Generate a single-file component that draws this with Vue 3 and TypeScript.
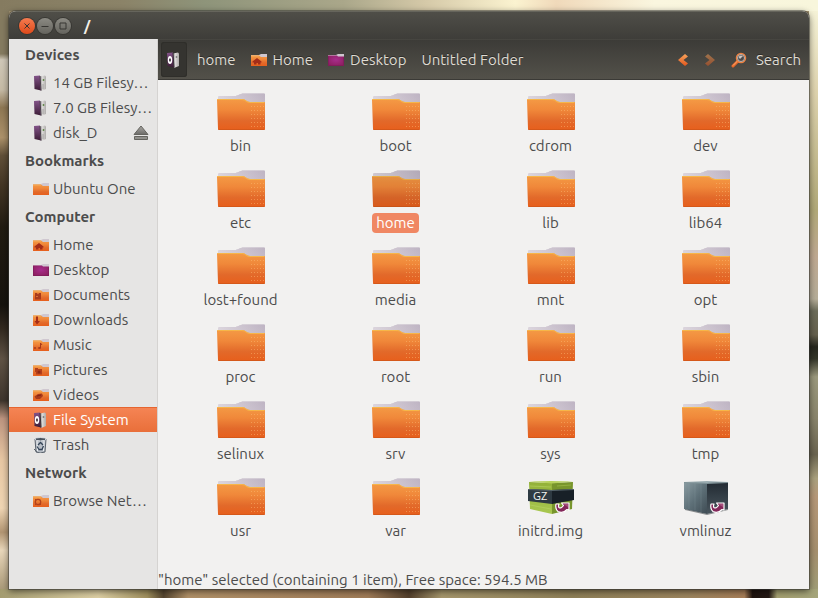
<script setup lang="ts">
import { ref } from 'vue'

interface Place {
  name: string
  icon: string
  ejectable?: boolean
}

interface PlaceGroup {
  title: string
  places: Place[]
}

interface Entry {
  name: string
  icon: string
  badge?: string
}

interface Crumb {
  name: string
  icon?: string
}

const groups: PlaceGroup[] = [
  {
    title: 'Devices',
    places: [
      { name: '14 GB Filesy…', icon: 'drive' },
      { name: '7.0 GB Filesy…', icon: 'drive' },
      { name: 'disk_D', icon: 'drive', ejectable: true },
    ],
  },
  { title: 'Bookmarks', places: [{ name: 'Ubuntu One', icon: 'small-folder' }] },
  {
    title: 'Computer',
    places: [
      { name: 'Home', icon: 'home' },
      { name: 'Desktop', icon: 'desktop' },
      { name: 'Documents', icon: 'documents' },
      { name: 'Downloads', icon: 'downloads' },
      { name: 'Music', icon: 'music' },
      { name: 'Pictures', icon: 'pictures' },
      { name: 'Videos', icon: 'videos' },
      { name: 'File System', icon: 'system' },
      { name: 'Trash', icon: 'trash' },
    ],
  },
  { title: 'Network', places: [{ name: 'Browse Net…', icon: 'network' }] },
]

const crumbs: Crumb[] = [
  { name: 'home' },
  { name: 'Home', icon: 'home' },
  { name: 'Desktop', icon: 'desktop' },
  { name: 'Untitled Folder' },
]

const folderNames = [
  'bin', 'boot', 'cdrom', 'dev', 'etc', 'home', 'lib', 'lib64', 'lost+found', 'media', 'mnt',
  'opt', 'proc', 'root', 'run', 'sbin', 'selinux', 'srv', 'sys', 'tmp', 'usr', 'var',
]

const entries: Entry[] = [
  ...folderNames.map((name) => ({ name, icon: 'folder' })),
  { name: 'initrd.img', icon: 'archive', badge: 'GZ' },
  { name: 'vmlinuz', icon: 'package' },
]

const currentPlace = ref('File System')
const selected = ref('home')
</script>

<template>
  <div class="wallpaper">
    <svg class="symbols" aria-hidden="true">
      <defs>
        <linearGradient id="g-front" x1="0" y1="0" x2="0" y2="1">
          <stop offset="0" stop-color="#f49a45" />
          <stop offset="0.35" stop-color="#f0883a" />
          <stop offset="0.7" stop-color="#e2692a" />
          <stop offset="1" stop-color="#e75f1c" />
        </linearGradient>
        <linearGradient id="g-back" x1="0" y1="0" x2="0" y2="1">
          <stop offset="0" stop-color="#c0b6c4" />
          <stop offset="1" stop-color="#e2dce4" />
        </linearGradient>
        <linearGradient id="g-backline" x1="0" y1="0" x2="1" y2="0">
          <stop offset="0" stop-color="#ebe6ea" />
          <stop offset="1" stop-color="#bdb2c2" />
        </linearGradient>
        <radialGradient id="g-desk" cx="0.5" cy="0.4" r="0.7">
          <stop offset="0" stop-color="#a72d8c" />
          <stop offset="1" stop-color="#8b1d5c" />
        </radialGradient>
        <linearGradient id="g-purple" x1="0" y1="0" x2="0" y2="1">
          <stop offset="0" stop-color="#84548a" />
          <stop offset="1" stop-color="#3c1c36" />
        </linearGradient>
        <linearGradient id="g-metal" x1="0" y1="0" x2="1" y2="0">
          <stop offset="0" stop-color="#8c8a8c" />
          <stop offset="0.4" stop-color="#dcdad8" />
          <stop offset="1" stop-color="#aeacaa" />
        </linearGradient>
        <linearGradient id="g-arrow" x1="0" y1="0" x2="0" y2="1">
          <stop offset="0" stop-color="#f7a45c" />
          <stop offset="1" stop-color="#e2561c" />
        </linearGradient>
        <linearGradient id="g-eject" x1="0" y1="0" x2="0" y2="1">
          <stop offset="0" stop-color="#aaa8a4" />
          <stop offset="1" stop-color="#6c6b68" />
        </linearGradient>
        <linearGradient id="g-slate" x1="0" y1="0" x2="1" y2="1">
          <stop offset="0" stop-color="#8a9ca2" />
          <stop offset="0.5" stop-color="#5e7078" />
          <stop offset="1" stop-color="#3f4c54" />
        </linearGradient>
        <linearGradient id="g-slate-dark" x1="0" y1="0" x2="0" y2="1">
          <stop offset="0" stop-color="#232b33" />
          <stop offset="1" stop-color="#49565e" />
        </linearGradient>
        <linearGradient id="g-green" x1="0" y1="0" x2="0" y2="1">
          <stop offset="0" stop-color="#93b138" />
          <stop offset="1" stop-color="#a9c850" />
        </linearGradient>
        <pattern id="p-dots" width="3" height="4" patternUnits="userSpaceOnUse">
          <rect x="1" y="1" width="1" height="1" fill="#ffc27a" opacity="0.45" />
        </pattern>
      </defs>

      <symbol id="i-folder" viewBox="0 0 48 38">
        <path d="M1 4.500Q1 3 2.500 3H17C22 3 22 .5 27 .5H47Q48 .5 48 1.500V30H1Z" fill="url(#g-back)" />
        <path d="M1 4.500Q1 3 2.500 3H17C22 3 22 .5 27 .5H47Q48 .5 48 1.500V9H1Z" fill="url(#g-backline)" opacity="0.6" />
        <path d="M0 7Q0 6 1 6H25C29 6 29 9 33 9H48L48 36Q48 37 47 37H2Q1 37 1 36Z" fill="url(#g-front)" />
        <path d="M0.500 6.500H25C29 6.500 29 9.500 33 9.500H47.500" fill="none" stroke="#f6b649" />
        <path d="M34 13H47V34H34Z" fill="url(#p-dots)" />
        <path d="M1.500 36.500H47.500" stroke="#d5581a" />
      </symbol>

      <symbol id="i-link" viewBox="0 0 15 12">
        <path d="M1 2Q0 7 3 9.500Q8 12 12 7.500L14 8V1H6.500L8.500 3.500Q6 7 4 5.500Q3 4.500 4 2Z" fill="#84285a" stroke="#fff" stroke-width="1.2" stroke-linejoin="round" />
        <path d="M8 2H13V5Z" fill="#a64d7c" />
      </symbol>

      <symbol id="i-archive" viewBox="0 0 48 38">
        <path d="M2 4L25 5V36L3 31Z" fill="url(#g-green)" />
        <path d="M25 5L46 4L45 31L25 36Z" fill="#78952c" />
        <path d="M2 3.500L24 3L46 3.500L25 5.500Z" fill="#b7d15d" />
        <path d="M3 8L24 9M3 27L24 31" stroke="#bad668" opacity="0.55" />
        <path d="M30 8L44 7M29 27L43 25" stroke="#a5c14e" opacity="0.6" />
        <path d="M1 11L25 12V26L1 23Z" fill="#2e3a42" />
        <path d="M25 12L47 11V22L25 26Z" fill="#182027" />
        <path d="M1 11.500L25 12.500L47 11.500" stroke="#56646b" fill="none" />
        <use href="#i-link" x="28" y="24" width="15" height="12" />
      </symbol>

      <symbol id="i-package" viewBox="0 0 48 38">
        <path d="M2 4L25 3L46 4L25 6Z" fill="#9daeb3" />
        <path d="M2 4.500L25 5V36L2 31Z" fill="url(#g-slate)" />
        <path d="M25 5L46 4.500V31L25 36Z" fill="url(#g-slate-dark)" />
        <path d="M7 5V31M13 5V32M19 5V34" stroke="#9bb0b5" opacity="0.17" />
        <path d="M2 4.500L25 5.500L46 4.500" stroke="#7f9297" fill="none" />
        <path d="M3 31.500L25 36.500L46 31.500" stroke="#252c30" fill="none" opacity="0.5" />
        <use href="#i-link" x="28" y="24" width="15" height="12" />
      </symbol>

      <symbol id="i-small-folder" viewBox="0 0 16 16">
        <path d="M0 3H8L10 2H16V8H0Z" fill="#cfc7d0" />
        <path d="M0 3.500H8L10 5H16V14H0Z" fill="url(#g-front)" />
        <path d="M0 4H8" stroke="#f6ad58" />
      </symbol>
      <symbol id="i-home" viewBox="0 0 16 16">
        <use href="#i-small-folder" width="16" height="16" />
        <path d="M6 6L10.500 9.500V10.500H9.500V12.500H7V11H5.500V12.500H3V10.500H1.500V9.500Z" fill="#a42d18" />
      </symbol>
      <symbol id="i-desktop" viewBox="0 0 16 16">
        <path d="M0 3H8L10 2H16V8H0Z" fill="#cfc7d0" />
        <path d="M0 3.500H9L10 4.500H16V14H0Z" fill="url(#g-desk)" />
        <path d="M0.500 4.500V13.500H15.500V5.500" fill="none" stroke="#7a1c56" opacity="0.6" />
      </symbol>
      <symbol id="i-documents" viewBox="0 0 16 16">
        <use href="#i-small-folder" width="16" height="16" />
        <path d="M2 6H4L5 7.500L6 6H8V12.500H2Z" fill="#a83a1c" />
        <path d="M3 9.500H5" stroke="#d66e34" />
      </symbol>
      <symbol id="i-downloads" viewBox="0 0 16 16">
        <use href="#i-small-folder" width="16" height="16" />
        <path d="M3 4.500H5V9H7L4 12.500L1.500 9H3Z" fill="#a42d18" />
      </symbol>
      <symbol id="i-music" viewBox="0 0 16 16">
        <use href="#i-small-folder" width="16" height="16" />
        <path d="M7.500 11V6L9 8" fill="none" stroke="#a83a1c" />
        <ellipse cx="6.500" cy="11" rx="1.500" ry="1" fill="#a83a1c" />
        <circle cx="2" cy="11" r="1" fill="#a83a1c" />
      </symbol>
      <symbol id="i-pictures" viewBox="0 0 16 16">
        <use href="#i-small-folder" width="16" height="16" />
        <path d="M2 6H5V7H9V12.500H3V10H2Z" fill="#b33f1c" />
        <circle cx="6" cy="10" r="1.500" fill="#8f2b16" />
      </symbol>
      <symbol id="i-videos" viewBox="0 0 16 16">
        <use href="#i-small-folder" width="16" height="16" />
        <path d="M5 7L9 6.500L10 9L7 12L3 12L1.500 9.500Z" fill="#a83a1c" />
        <path d="M4 9L8 8" stroke="#832313" />
      </symbol>
      <symbol id="i-network" viewBox="0 0 16 16">
        <use href="#i-small-folder" width="16" height="16" />
        <circle cx="5" cy="9" r="2.700" fill="none" stroke="#b2411b" stroke-width="1.300" />
        <path d="M2 12L3 11M8 12L7 11M2 6L3 7" stroke="#b2411b" />
      </symbol>

      <symbol id="i-drive" viewBox="0 0 16 16">
        <path d="M1 1L7 0.500L8 15.500L1.500 14Z" fill="url(#g-purple)" />
        <path d="M7 1.500L12 0.500Q13 1 13 2V14L8 16Z" fill="url(#g-metal)" />
        <path d="M7 1L8 15.500" stroke="#4b3d4b" />
        <path d="M10.500 4V6M9.500 5H11.500" stroke="#658a4e" />
        <path d="M10 9V14" stroke="#777" opacity="0.5" />
      </symbol>
      <symbol id="i-system" viewBox="0 0 16 16">
        <path d="M1 1L7 0.500L8 15.500L1.500 14Z" fill="url(#g-purple)" />
        <path d="M7 1.500L12 0.500Q13 1 13 2V14L8 16Z" fill="url(#g-metal)" />
        <path d="M7 1L8 15.500" stroke="#372f37" />
        <ellipse cx="4" cy="8" rx="2.200" ry="4" fill="#fff" />
        <ellipse cx="4" cy="8" rx="0.900" ry="1.700" fill="#332434" />
        <path d="M10.500 4V6M9.500 5H11.500" stroke="#858585" />
      </symbol>
      <symbol id="i-trash" viewBox="0 0 16 16">
        <path d="M2 2L3 15Q7 17 12 15L13 2Z" fill="#b7bdc5" stroke="#5a626c" />
        <path d="M4 4L4.500 14M11 4L10.500 14" stroke="#eef1f4" />
        <ellipse cx="7.500" cy="2.200" rx="5.500" ry="1.700" fill="#49535e" stroke="#dde1e6" />
        <path d="M5 8L7.500 5.500L10 8M10.500 9L9 12.500H5.500M4 9.500L6 12.500" fill="none" stroke="#344457" stroke-width="1.300" />
        <path d="M1 12L4 15" stroke="#5a626c" />
      </symbol>
      <symbol id="i-search" viewBox="0 0 16 16">
        <path d="M2 14L7 9" stroke="#e8692a" stroke-width="3" stroke-linecap="round" />
        <path d="M2 13.500L6.500 9" stroke="#f8ae76" />
        <circle cx="10" cy="6" r="4.500" fill="#6b6868" stroke="#ee8140" stroke-width="1.500" />
        <circle cx="10" cy="6" r="3.500" fill="#4c4a4b" stroke="#d6cbc4" stroke-width="0.800" />
        <path d="M7.500 5Q9 2.500 12 4L9 7Z" fill="#c9c6c4" />
      </symbol>
    </svg>

    <main class="window">
      <header class="titlebar">
        <button class="control close" type="button" aria-label="Close">
          <svg viewBox="0 0 16 16"><path d="M5.500 5.500L10.500 10.500M10.500 5.500L5.500 10.500" /></svg>
        </button>
        <button class="control" type="button" aria-label="Minimize">
          <svg viewBox="0 0 16 16"><path d="M4.500 8.500H11.500" /></svg>
        </button>
        <button class="control" type="button" aria-label="Maximize">
          <svg viewBox="0 0 16 16"><path d="M5 5H11V11H5Z" /></svg>
        </button>
        <h1 class="title">/</h1>
      </header>

      <div class="body">
        <nav class="sidebar" aria-label="Places">
          <section v-for="group in groups" :key="group.title">
            <h2 class="group-title">{{ group.title }}</h2>
            <ul class="places">
              <li
                v-for="place in group.places"
                :key="place.name"
                class="place-row"
                :class="{ current: place.name === currentPlace }"
              >
                <button class="place" type="button" @click="currentPlace = place.name">
                  <svg class="small-icon"><use :href="'#i-' + place.icon" /></svg>
                  <span>{{ place.name }}</span>
                </button>
                <button v-if="place.ejectable" class="eject" type="button" :aria-label="'Eject ' + place.name">
                  <svg viewBox="0 0 16 16">
                    <path d="M8 1L15 9.500H1Z" fill="url(#g-eject)" stroke="#65645f" />
                    <path d="M1.500 11.500H14.500V14.500H1.500Z" fill="#92918d" stroke="#65645f" />
                  </svg>
                </button>
              </li>
            </ul>
          </section>
        </nav>

        <div class="content">
          <div class="toolbar">
            <button class="root-button" type="button" aria-label="File System">
              <svg class="small-icon"><use href="#i-system" /></svg>
            </button>
            <button v-for="crumb in crumbs" :key="crumb.name" class="crumb" type="button">
              <svg v-if="crumb.icon" class="small-icon"><use :href="'#i-' + crumb.icon" /></svg>
              <span>{{ crumb.name }}</span>
            </button>
            <div class="actions">
              <button class="arrow" type="button" aria-label="Back">
                <svg viewBox="0 0 12 14"><path d="M8 1L11 3.500L6.500 7L11 10.500L8 13L1 7Z" fill="url(#g-arrow)" /></svg>
              </button>
              <button class="arrow forward" type="button" aria-label="Forward">
                <svg viewBox="0 0 12 14"><path d="M4 1L1 3.500L5.500 7L1 10.500L4 13L11 7Z" fill="url(#g-arrow)" /></svg>
              </button>
              <button class="search" type="button">
                <svg class="small-icon"><use href="#i-search" /></svg>
                <span>Search</span>
              </button>
            </div>
          </div>

          <div class="files">
            <button
              v-for="entry in entries"
              :key="entry.name"
              class="file"
              :class="{ selected: entry.name === selected }"
              type="button"
              @click="selected = entry.name"
            >
              <svg class="file-icon" viewBox="0 0 48 38">
                <use :href="'#i-' + entry.icon" width="48" height="38" />
                <text v-if="entry.badge" class="badge" x="6" y="22">{{ entry.badge }}</text>
              </svg>
              <span class="file-name">{{ entry.name }}</span>
            </button>
          </div>

          <footer class="status">"home" selected (containing 1 item), Free space: 594.5 MB</footer>
        </div>
      </div>
    </main>
  </div>
</template>

<style>
body {
  margin: 0;
}
</style>

<style scoped>
.wallpaper {
  box-sizing: border-box;
  min-height: 100vh;
  display: flex;
  padding: 11px 9px 9px;
  font-family: Ubuntu, 'Noto Sans', 'Open Sans', sans-serif;
  font-size: 15px;
  line-height: 20px;
  color: #4c4c4c;
  background:
    linear-gradient(90deg, #857b60 0%, #8b8368 15%, #8e947a 25%, #aaa78a 42%, #d5c9a8 52%, #fbf3d0 63%, #f0d9ba 68%, #faf6df 80%, #f8f6dc 100%) top / 100% 11px no-repeat,
    linear-gradient(90deg, #a49c70 0%, #ded0a4 12%, #a0905e 18%, #55452f 20%, #b19168 23%, #a07c58 45%, #54402c 50%, #a6976c 54%, #8f8058 70%, #9c855e 84%, #a77e58 91%, #201510 92%, #241814 94%, #a4a070 95%, #a4a47a 100%) bottom / 100% 9px no-repeat,
    linear-gradient(180deg, #857b60 0%, #857b60 9%, #d0c8b8 10%, #c6bba6 15%, #8e7753 18%, #ad926a 23%, #615039 26%, #443625 31%, #221c12 38%, #16130e 51%, #332a20 55%, #605345 60%, #3e352d 67%, #bd9580 70%, #e8c8a4 77%, #f0d6b4 85%, #b29572 89%, #ead8bb 92%, #9c8c6a 100%) left / 9px 100% no-repeat,
    linear-gradient(180deg, #f8f6dc 0%, #dfd4af 15%, #b1a978 35%, #bfa992 43%, #b5ad98 50%, #6c6c5a 52%, #65604d 56%, #26271e 58%, #343629 60%, #9b997d 63%, #89846b 70%, #6a6450 76%, #aaa17e 80%, #b69878 83%, #a58f6d 92%, #9fa078 100%) right / 9px 100% no-repeat,
    #a09070;
}

.symbols {
  position: absolute;
  width: 0;
  height: 0;
}

button {
  margin: 0;
  padding: 0;
  border: 0;
  background: none;
  color: inherit;
  font: inherit;
  cursor: pointer;
}

svg {
  display: block;
}

.window {
  flex: 1;
  min-width: 0;
  display: flex;
  flex-direction: column;
  border-radius: 7px 7px 0 0;
  overflow: hidden;
  background: #f2f1f0;
  box-shadow: 0 0 0 1px rgba(60, 59, 55, 0.5), 0 2px 7px rgba(0, 0, 0, 0.6);
}

.titlebar {
  box-sizing: border-box;
  height: 28px;
  display: flex;
  align-items: center;
  gap: 2px;
  padding: 0 10px;
  border-top: 1px solid #66655c;
  background: linear-gradient(#4f4e48, #3e3d39);
  color: #f4f0e8;
}

.control {
  width: 16px;
  height: 16px;
  border-radius: 50%;
  background: linear-gradient(#8b8a83, #65645e);
  box-shadow: 0 0 0 1px #383733;
}

.control path {
  fill: none;
  stroke: #373632;
}

.control.close {
  background: linear-gradient(#f57b50, #df4a1a);
}

.title {
  margin: 0 0 0 11px;
  font-size: 15px;
  font-weight: 700;
}

.body {
  flex: 1;
  display: flex;
}

.sidebar {
  flex: 0 0 148px;
  border-right: 1px solid #d5d3d1;
  background: #e6e5e4;
}

.group-title {
  margin: 0;
  padding: 1px 0 0 16px;
  font-size: 15px;
  line-height: 30px;
  font-weight: 700;
}

.places {
  margin: 0;
  padding: 0;
  list-style: none;
}

.place-row {
  height: 25px;
  display: flex;
  align-items: center;
}

.place {
  flex: 1;
  height: 25px;
  display: flex;
  align-items: center;
  gap: 4px;
  padding-left: 24px;
  white-space: nowrap;
}

.place-row.current {
  background: linear-gradient(#e56530 1px, #f58454 1px, #e96f3a);
  color: #fff;
  text-shadow: 0 -1px rgba(120, 40, 10, 0.3);
}

.small-icon {
  flex: none;
  width: 16px;
  height: 16px;
}

.eject {
  width: 16px;
  height: 16px;
  margin-right: 8px;
}

.content {
  flex: 1;
  min-width: 0;
  display: flex;
  flex-direction: column;
}

.toolbar {
  box-sizing: border-box;
  height: 41px;
  display: flex;
  align-items: center;
  padding: 0 8px 0 3px;
  gap: 15px;
  border-top: 1px solid #464540;
  border-bottom: 1px solid #3b3a36;
  background: linear-gradient(#3c3b37, #53514a);
  color: #dfdbd2;
  white-space: nowrap;
}

.root-button {
  width: 26px;
  height: 35px;
  display: flex;
  align-items: center;
  justify-content: center;
  margin-right: -5px;
  border-radius: 3px;
  background: #353430;
  box-shadow: inset 0 0 0 1px #2f2e2a;
}

.crumb,
.search {
  display: flex;
  align-items: center;
  gap: 6px;
  text-shadow: 0 -1px #2d2c29;
}

.actions {
  margin-left: auto;
  display: flex;
  align-items: center;
  gap: 15px;
}

.search {
  gap: 9px;
}

.arrow {
  width: 12px;
  height: 14px;
}

.arrow.forward {
  opacity: 0.5;
}

.files {
  flex: 1;
  display: grid;
  grid-template-columns: repeat(auto-fill, 155px);
  grid-auto-rows: 77px;
  padding: 13px 0 0 5px;
}

.file {
  display: flex;
  flex-direction: column;
  align-items: center;
  gap: 5px;
}

.file-icon {
  width: 48px;
  height: 38px;
}

.badge {
  fill: #f3f3ef;
  font-family: 'Liberation Sans Narrow', 'Open Sans', sans-serif;
  font-size: 11px;
}

.file-name {
  padding: 0 4px;
  border-radius: 4px;
}

.file.selected .file-icon {
  filter: brightness(0.94);
}

.file.selected .file-name {
  background: #f08763;
  color: #fff;
}

.status {
  line-height: 18px;
  white-space: nowrap;
}
</style>
